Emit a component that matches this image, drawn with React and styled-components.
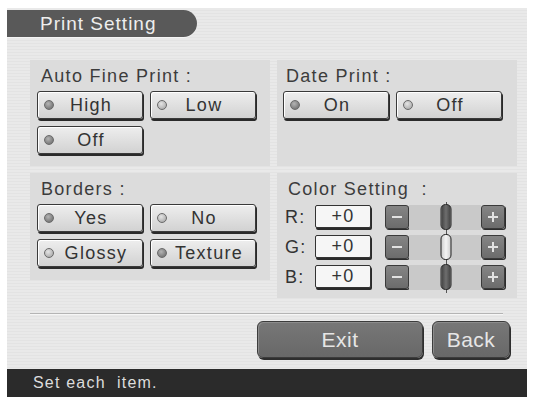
import React from "react";
import styled, { createGlobalStyle } from "styled-components";

const Global = createGlobalStyle`
  html, body { margin: 0; padding: 0; background: #ffffff; }
  body { font-family: "Liberation Sans", "DejaVu Sans", sans-serif; }
`;

const Screen = styled.div`
  width: 520px;
  height: 389px;
  margin: 8px 0 0 7px;
  display: flex;
  flex-direction: column;
  overflow: hidden;
  background: repeating-linear-gradient(
    180deg,
    #e9e9e9 0px,
    #e9e9e9 2px,
    #e3e3e3 2px,
    #e3e3e3 3px
  );
`;

const TitleTab = styled.div`
  margin-top: 2px;
  height: 27px;
  width: 190px;
  box-sizing: border-box;
  padding-left: 33px;
  display: flex;
  align-items: center;
  background: #595959;
  border-radius: 0 14px 14px 0;
  color: #eeeeee;
  font-size: 19px;
  letter-spacing: 1px;
  box-shadow: 0 1px 0 #f4f4f4;
`;

const PanelGrid = styled.div`
  margin-top: 23px;
  padding: 0 10px 0 23px;
  display: grid;
  grid-template-columns: 240px 240px;
  grid-template-rows: 106px auto;
  column-gap: 7px;
  row-gap: 7px;
  align-items: start;
`;

const Panel = styled.div`
  height: ${(p) => p.$h}px;
  box-sizing: border-box;
  padding: 6px 0 0 ${(p) => p.$pl || 7}px;
  background: #dcdcdc;
  display: flex;
  flex-direction: column;
`;

const PanelLabel = styled.div`
  height: 20px;
  line-height: 20px;
  margin-left: ${(p) => p.$ml || 3}px;
  margin-bottom: ${(p) => p.$mb || 5}px;
  font-size: 18px;
  letter-spacing: 1.3px;
  color: #3c3c3c;
  white-space: pre;
`;

const OptionGrid = styled.div`
  display: grid;
  grid-template-columns: 106px 106px;
  grid-auto-rows: 28px;
  column-gap: 7px;
  row-gap: 7px;
`;

const OptionButton = styled.div`
  box-sizing: border-box;
  height: 28px;
  display: flex;
  align-items: center;
  padding: 0 4px 0 6px;
  background: linear-gradient(180deg, #eeeeee 0%, #dddddd 60%, #d2d2d2 100%);
  border: 1px solid #3a3a3a;
  border-radius: 3px;
  box-shadow: 1px 2px 0 #2a2a2a, inset 1px 1px 0 #ffffff;
  color: #333333;
  font-size: 18px;
  letter-spacing: 1.3px;
`;

const Bullet = styled.span`
  flex: none;
  width: 10px;
  height: 10px;
  border-radius: 50%;
  box-sizing: border-box;
  border: 1px solid #6a6a6a;
  background: ${(p) =>
    p.$on
      ? "radial-gradient(circle at 40% 35%, #b4b4b4 0%, #7c7c7c 70%)"
      : "radial-gradient(circle at 40% 35%, #e4e4e4 0%, #b0b0b0 75%)"};
`;

const OptionText = styled.span`
  flex: 1;
  text-align: center;
  margin-right: ${(p) => (p.$wide ? 0 : 10)}px;
  white-space: nowrap;
`;

const ColorRows = styled.div`
  display: flex;
  flex-direction: column;
  gap: 5px;
`;

const ColorRow = styled.div`
  display: flex;
  align-items: center;
  height: 25px;
`;

const Channel = styled.span`
  width: 30px;
  font-size: 18px;
  letter-spacing: 1.3px;
  color: #333333;
`;

const ValueBox = styled.div`
  box-sizing: border-box;
  width: 56px;
  height: 23px;
  margin: 0 14px 2px 0;
  display: flex;
  align-items: center;
  justify-content: center;
  background: #f6f6f6;
  border: 1px solid #333333;
  border-radius: 2px;
  box-shadow: 1px 2px 0 #2a2a2a;
  font-size: 18px;
  letter-spacing: 1.3px;
  color: #333333;
`;

const StepButton = styled.div`
  flex: none;
  box-sizing: border-box;
  width: 24px;
  height: 24px;
  margin-bottom: 1px;
  display: flex;
  align-items: center;
  justify-content: center;
  background: linear-gradient(180deg, #858585 0%, #6c6c6c 100%);
  border: 1px solid #3a3a3a;
  border-radius: 3px;
  box-shadow: 1px 1px 0 #2c2c2c;
`;

const Track = styled.div`
  position: relative;
  width: 72px;
  height: 25px;
  background: #c9c9c9;
`;

const CenterLine = styled.div`
  position: absolute;
  left: 37px;
  top: -3px;
  bottom: -3px;
  width: 1px;
  background: #555555;
`;

const Thumb = styled.div`
  position: absolute;
  top: -1px;
  width: 11px;
  height: 26px;
  box-sizing: border-box;
  transform: translateX(-50%);
  border: 1px solid #222222;
  border-radius: 5px;
  background: ${(p) =>
    p.$light
      ? "linear-gradient(90deg, #cfcfcf 0%, #f4f4f4 50%, #d0d0d0 100%)"
      : "linear-gradient(90deg, #444 0%, #6e6e6e 50%, #444 100%)"};
`;

const Separator = styled.div`
  margin: 15px 0 0 23px;
  width: 473px;
  height: 1px;
  background: #b4b4b4;
  box-shadow: 0 1px 0 #f6f6f6;
`;

const ActionRow = styled.div`
  margin-top: 7px;
  padding-right: 17px;
  display: flex;
  justify-content: flex-end;
  gap: 9px;
`;

const ActionButton = styled.div`
  box-sizing: border-box;
  width: ${(p) => p.$w}px;
  height: 37px;
  display: flex;
  align-items: center;
  justify-content: center;
  background: linear-gradient(180deg, #777777 0%, #686868 100%);
  border: 1px solid #3c3c3c;
  border-radius: 6px;
  box-shadow: 1px 2px 0 #2e2e2e, inset 1px 1px 0 #8c8c8c;
  color: #e6e6e6;
  font-size: 21px;
  letter-spacing: 0.5px;
`;

const StatusBar = styled.div`
  margin-top: auto;
  height: 28px;
  box-sizing: border-box;
  padding-left: 26px;
  display: flex;
  align-items: center;
  background: #2b2b2b;
  color: #dddddd;
  font-size: 16px;
  letter-spacing: 1.2px;
  white-space: pre;
`;

const Glyph = ({ plus }) => (
  <svg width="12" height="12" viewBox="0 0 12 12">
    <rect x="1" y="5" width="10" height="2" fill="#e2e2e2" />
    {plus && <rect x="5" y="1" width="2" height="10" fill="#e2e2e2" />}
  </svg>
);

const Option = ({ label, on, wide }) => (
  <OptionButton>
    <Bullet $on={on} />
    <OptionText $wide={wide}>{label}</OptionText>
  </OptionButton>
);

const channels = [
  { name: "R:", value: "+0", light: false },
  { name: "G:", value: "+0", light: true },
  { name: "B:", value: "+0", light: false },
];

export default function App() {
  return (
    <>
      <Global />
      <Screen>
        <TitleTab>Print Setting</TitleTab>
        <PanelGrid>
          <Panel $h={106}>
            <PanelLabel $ml={4}>Auto Fine Print :</PanelLabel>
            <OptionGrid>
              <Option label="High" on />
              <Option label="Low" />
              <Option label="Off" on />
            </OptionGrid>
          </Panel>
          <Panel $h={106} $pl={6}>
            <PanelLabel $ml={3}>Date Print :</PanelLabel>
            <OptionGrid>
              <Option label="On" on />
              <Option label="Off" />
            </OptionGrid>
          </Panel>
          <Panel $h={107}>
            <PanelLabel $ml={4}>Borders :</PanelLabel>
            <OptionGrid>
              <Option label="Yes" on />
              <Option label="No" />
              <Option label="Glossy" wide />
              <Option label="Texture" wide on />
            </OptionGrid>
          </Panel>
          <Panel $h={125} $pl={8}>
            <PanelLabel $ml={0} $mb={6}>Color Setting  :</PanelLabel>
            <ColorRows>
              {channels.map((c) => (
                <ColorRow key={c.name}>
                  <Channel>{c.name}</Channel>
                  <ValueBox>{c.value}</ValueBox>
                  <StepButton>
                    <Glyph />
                  </StepButton>
                  <Track>
                    <CenterLine />
                    <Thumb $light={c.light} style={{ left: `${(0 + 10) / 20 * 100 + 2}%` }} />
                  </Track>
                  <StepButton>
                    <Glyph plus />
                  </StepButton>
                </ColorRow>
              ))}
            </ColorRows>
          </Panel>
        </PanelGrid>
        <Separator />
        <ActionRow>
          <ActionButton $w={166}>Exit</ActionButton>
          <ActionButton $w={78}>Back</ActionButton>
        </ActionRow>
        <StatusBar>Set each  item.</StatusBar>
      </Screen>
    </>
  );
}
